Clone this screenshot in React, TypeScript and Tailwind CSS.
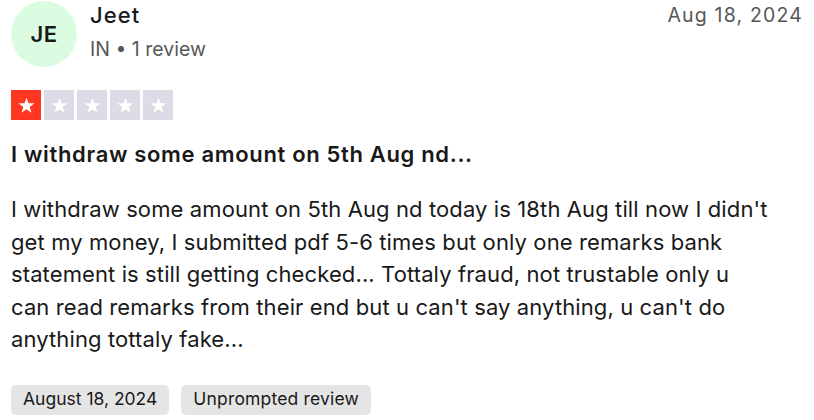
import React from 'react';

const Star = () => (
    <svg viewBox="0 0 24 24" className="w-[19px] h-[19px]" fill="#ffffff">
        <path d="M12 2.2l2.6 7.1h7.5l-6.1 4.5 2.3 7.3L12 16.6l-6.3 4.5 2.3-7.3-6.1-4.5h7.5z" />
    </svg>
);

const StarRating = ({ rating }: { rating: number }) => (
    <div className="flex gap-[3px]">
        {[1, 2, 3, 4, 5].map(i => (
            <div
                key={i}
                className={`w-[30px] h-[30px] flex items-center justify-center ${i <= rating ? 'bg-[#ff3722]' : 'bg-[#dcdce6]'}`}
            >
                <Star />
            </div>
        ))}
    </div>
);

// wrapped the way the original card wraps it
const bodyLines = [
    "I withdraw some amount on 5th Aug nd today is 18th Aug till now I didn't",
    "get my money, I submitted pdf 5-6 times but only one remarks bank",
    "statement is still getting checked... Tottaly fraud, not trustable only u",
    "can read remarks from their end but u can't say anything, u can't do",
    "anything tottaly fake...",
];

export default function App() {
    return (
        <div className="w-[814px] h-[420px] bg-white px-[11px] text-[#191919] font-['Inter',sans-serif] overflow-hidden">
            <div className="flex justify-between items-start">
                <div className="flex items-start gap-[13px] pt-px">
                    <div className="w-[66px] h-[66px] rounded-full bg-[#dcfce2] flex items-center justify-center text-[22px] font-semibold tracking-[0.02em]">
                        JE
                    </div>
                    <div className="flex flex-col -mt-px gap-[5px]">
                        <span className="text-[22px] font-medium leading-[30px] tracking-[0.05em]">Jeet</span>
                        <span className="text-[19.5px] leading-[28px] text-[#575757]">IN • 1 review</span>
                    </div>
                </div>
                <div className="text-[19.5px] leading-[30px] text-[#575757] tracking-[0.06em]">Aug 18, 2024</div>
            </div>

            <div className="mt-[23px]">
                <StarRating rating={1} />
            </div>

            <h2 className="mt-[19px] text-[22px] font-semibold leading-[30px] tracking-[0.03em]">
                I withdraw some amount on 5th Aug nd...
            </h2>

            <p className="mt-[24px] text-[22px] leading-[32.5px] tracking-[0.005em]">
                {bodyLines.map((line, i) => (
                    <React.Fragment key={i}>
                        {line}
                        {i < bodyLines.length - 1 && <br />}
                    </React.Fragment>
                ))}
            </p>

            <div className="mt-[29px] flex gap-[12px]">
                <span className="px-[12px] h-[30px] flex items-center rounded-[5px] bg-[#e5e5e5] text-[17.5px]">August 18, 2024</span>
                <span className="px-[12px] h-[30px] flex items-center rounded-[5px] bg-[#e5e5e5] text-[17.5px] tracking-[0.01em]">Unprompted review</span>
            </div>
        </div>
    );
}
